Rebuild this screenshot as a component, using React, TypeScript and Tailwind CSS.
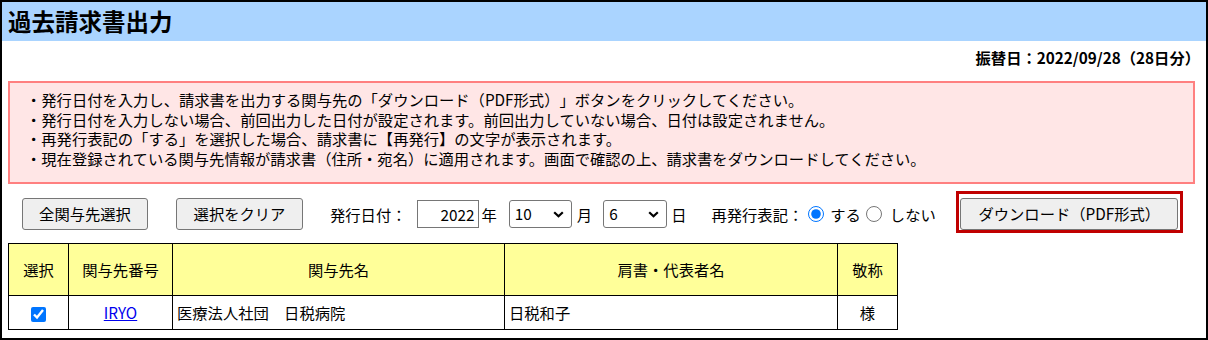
import React from "react";

const font = { fontFamily: '"Noto Sans CJK JP", "Noto Sans", sans-serif' };

function Chevron() {
  return (
    <svg className="pointer-events-none absolute right-[8px] top-[11px]" width="11" height="7" viewBox="0 0 11 7">
      <path d="M1.2 1.2 L5.5 5.3 L9.8 1.2" fill="none" stroke="#000" strokeWidth="2.2" />
    </svg>
  );
}

function Select({ value, width }: { value: string; width: string }) {
  return (
    <div className={`relative h-[28px] ${width}`}>
      <select
        defaultValue={value}
        className="h-full w-full appearance-none rounded-[3px] border border-[#767676] bg-white pl-[5px] text-[15.3px] leading-none text-black"
      >
        <option value={value}>{value}</option>
      </select>
      <Chevron />
    </div>
  );
}

const btn =
  "h-[32px] rounded-[3px] border border-[#767676] bg-[#efefef] text-[15.3px] leading-none text-black";

export default function App() {
  return (
    <div
      className="box-border h-[340px] w-[1208px] overflow-hidden border-2 border-black bg-white text-black [text-spacing-trim:space-all]"
      style={font}
    >
      {/* title bar */}
      <div className="flex h-[39px] items-center bg-[#aad4ff] pl-[6px]">
        <h1 className="text-[23.5px] font-bold leading-none">過去請求書出力</h1>
      </div>

      <div className="flex h-[32px] items-center justify-end pr-[6px] text-[15.3px] font-bold">
        振替日：2022/09/28（28日分）
      </div>

      {/* notes */}
      <div className="ml-[6px] mr-[11px] mt-[8px] box-border h-[103px] border-2 border-[#ff8080] bg-[#ffe6e6] pl-[16px] pt-[7px] text-[15.3px] leading-[19.7px]">
        <p>・発行日付を入力し、請求書を出力する関与先の「ダウンロード（PDF形式）」ボタンをクリックしてください。</p>
        <p>・発行日付を入力しない場合、前回出力した日付が設定されます。前回出力していない場合、日付は設定されません。</p>
        <p>・再発行表記の「する」を選択した場合、請求書に【再発行】の文字が表示されます。</p>
        <p>・現在登録されている関与先情報が請求書（住所・宛名）に適用されます。画面で確認の上、請求書をダウンロードしてください。</p>
      </div>

      {/* controls */}
      <div className="mt-[7px] flex h-[46px] items-center pl-[20px] text-[15.3px]">
        <button className={`${btn} w-[126px]`}>全関与先選択</button>
        <button className={`${btn} ml-[28px] w-[127px]`}>選択をクリア</button>
        <span className="ml-[27px]">発行日付：</span>
        <input
          defaultValue="2022"
          className="ml-[10px] box-border h-[28px] w-[62px] border border-[#767676] pr-[3px] text-right text-[15.3px]"
        />
        <span className="ml-[3px]">年</span>
        <div className="ml-[12px]">
          <Select value="10" width="w-[63px]" />
        </div>
        <span className="ml-[5px]">月</span>
        <div className="ml-[11px]">
          <Select value="6" width="w-[64px]" />
        </div>
        <span className="ml-[4px]">日</span>
        <span className="ml-[25px]">再発行表記：</span>
        <input type="radio" name="re" defaultChecked className="m-0 ml-[5px] h-[16px] w-[16px]" />
        <span className="ml-[6px]">する</span>
        <input type="radio" name="re" className="m-0 ml-[5px] h-[16px] w-[16px]" />
        <span className="ml-[8px]">しない</span>
        <div className="ml-[20px] box-border flex h-[42px] w-[227px] justify-center self-start border-[3px] border-[#c00000] pt-[4px]">
          <button className={`${btn} h-[31px] w-[218px]`}>ダウンロード（PDF形式）</button>
        </div>
      </div>

      {/* list */}
      <table className="ml-[6px] mt-[6px] table-fixed border-collapse text-[15.3px]">
        <thead>
          <tr className="h-[52px] bg-[#ffff99]">
            <th className="w-[60px] border border-black font-normal">選択</th>
            <th className="w-[104px] border border-black font-normal">関与先番号</th>
            <th className="w-[332px] border border-black font-normal">関与先名</th>
            <th className="w-[333px] border border-black font-normal">肩書・代表者名</th>
            <th className="w-[60px] border border-black font-normal">敬称</th>
          </tr>
        </thead>
        <tbody>
          <tr className="h-[34px]">
            <td className="border border-black text-center">
              <input type="checkbox" defaultChecked className="m-0 h-[15px] w-[15px] align-middle" />
            </td>
            <td className="border border-black text-center">
              <a href="#" className="text-[#0000ee] underline">IRYO</a>
            </td>
            <td className="border border-black pl-[4px]">医療法人社団　日税病院</td>
            <td className="border border-black pl-[4px]">日税和子</td>
            <td className="border border-black text-center">様</td>
          </tr>
        </tbody>
      </table>
    </div>
  );
}
